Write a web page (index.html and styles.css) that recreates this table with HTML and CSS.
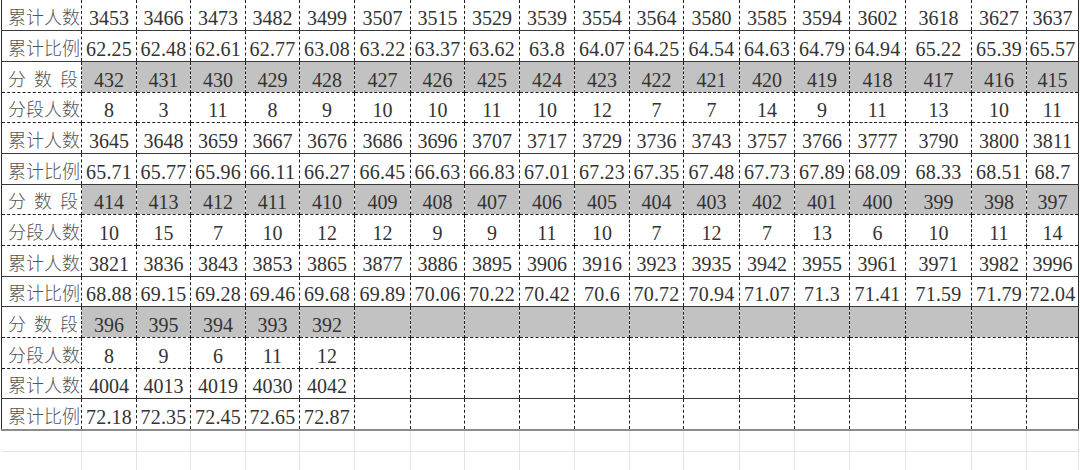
FILE: index.html
```html
<!DOCTYPE html>
<html>
<head>
<meta charset="utf-8">
<title>分数段统计</title>
<link rel="stylesheet" href="styles.css">
</head>
<body>
<table class="sheet">
<colgroup>
<col class="c-label"><col class="w55"><col class="w54"><col class="w55"><col class="w54"><col class="w55"><col class="w56"><col class="w54"><col class="w55"><col class="w55"><col class="w55"><col class="w54"><col class="w56"><col class="w55"><col class="w55"><col class="w56"><col class="w66"><col class="w55"><col class="w52">
</colgroup>
<tbody>
<tr class="solid"><th>累计人数</th><td>3453</td><td>3466</td><td>3473</td><td>3482</td><td>3499</td><td>3507</td><td>3515</td><td>3529</td><td>3539</td><td>3554</td><td>3564</td><td>3580</td><td>3585</td><td>3594</td><td>3602</td><td>3618</td><td>3627</td><td>3637</td></tr>
<tr class="solid ratio"><th>累计比例</th><td>62.25</td><td>62.48</td><td>62.61</td><td>62.77</td><td>63.08</td><td>63.22</td><td>63.37</td><td>63.62</td><td>63.8</td><td>64.07</td><td>64.25</td><td>64.54</td><td>64.63</td><td>64.79</td><td>64.94</td><td>65.22</td><td>65.39</td><td>65.57</td></tr>
<tr class="band"><th class="spread">分数段</th><td>432</td><td>431</td><td>430</td><td>429</td><td>428</td><td>427</td><td>426</td><td>425</td><td>424</td><td>423</td><td>422</td><td>421</td><td>420</td><td>419</td><td>418</td><td>417</td><td>416</td><td>415</td></tr>
<tr><th>分段人数</th><td>8</td><td>3</td><td>11</td><td>8</td><td>9</td><td>10</td><td>10</td><td>11</td><td>10</td><td>12</td><td>7</td><td>7</td><td>14</td><td>9</td><td>11</td><td>13</td><td>10</td><td>11</td></tr>
<tr class="solid"><th>累计人数</th><td>3645</td><td>3648</td><td>3659</td><td>3667</td><td>3676</td><td>3686</td><td>3696</td><td>3707</td><td>3717</td><td>3729</td><td>3736</td><td>3743</td><td>3757</td><td>3766</td><td>3777</td><td>3790</td><td>3800</td><td>3811</td></tr>
<tr class="solid ratio"><th>累计比例</th><td>65.71</td><td>65.77</td><td>65.96</td><td>66.11</td><td>66.27</td><td>66.45</td><td>66.63</td><td>66.83</td><td>67.01</td><td>67.23</td><td>67.35</td><td>67.48</td><td>67.73</td><td>67.89</td><td>68.09</td><td>68.33</td><td>68.51</td><td>68.7</td></tr>
<tr class="band"><th class="spread">分数段</th><td>414</td><td>413</td><td>412</td><td>411</td><td>410</td><td>409</td><td>408</td><td>407</td><td>406</td><td>405</td><td>404</td><td>403</td><td>402</td><td>401</td><td>400</td><td>399</td><td>398</td><td>397</td></tr>
<tr><th>分段人数</th><td>10</td><td>15</td><td>7</td><td>10</td><td>12</td><td>12</td><td>9</td><td>9</td><td>11</td><td>10</td><td>7</td><td>12</td><td>7</td><td>13</td><td>6</td><td>10</td><td>11</td><td>14</td></tr>
<tr class="solid"><th>累计人数</th><td>3821</td><td>3836</td><td>3843</td><td>3853</td><td>3865</td><td>3877</td><td>3886</td><td>3895</td><td>3906</td><td>3916</td><td>3923</td><td>3935</td><td>3942</td><td>3955</td><td>3961</td><td>3971</td><td>3982</td><td>3996</td></tr>
<tr class="solid ratio"><th>累计比例</th><td>68.88</td><td>69.15</td><td>69.28</td><td>69.46</td><td>69.68</td><td>69.89</td><td>70.06</td><td>70.22</td><td>70.42</td><td>70.6</td><td>70.72</td><td>70.94</td><td>71.07</td><td>71.3</td><td>71.41</td><td>71.59</td><td>71.79</td><td>72.04</td></tr>
<tr class="band"><th class="spread">分数段</th><td>396</td><td>395</td><td>394</td><td>393</td><td>392</td><td></td><td></td><td></td><td></td><td></td><td></td><td></td><td></td><td></td><td></td><td></td><td></td><td></td></tr>
<tr><th>分段人数</th><td>8</td><td>9</td><td>6</td><td>11</td><td>12</td><td></td><td></td><td></td><td></td><td></td><td></td><td></td><td></td><td></td><td></td><td></td><td></td><td></td></tr>
<tr class="solid"><th>累计人数</th><td>4004</td><td>4013</td><td>4019</td><td>4030</td><td>4042</td><td></td><td></td><td></td><td></td><td></td><td></td><td></td><td></td><td></td><td></td><td></td><td></td><td></td></tr>
<tr class="last ratio"><th>累计比例</th><td>72.18</td><td>72.35</td><td>72.45</td><td>72.65</td><td>72.87</td><td></td><td></td><td></td><td></td><td></td><td></td><td></td><td></td><td></td><td></td><td></td><td></td><td></td></tr>
<tr class="ghost"><th></th><td></td><td></td><td></td><td></td><td></td><td></td><td></td><td></td><td></td><td></td><td></td><td></td><td></td><td></td><td></td><td></td><td></td><td></td></tr>
<tr class="ghost"><th></th><td></td><td></td><td></td><td></td><td></td><td></td><td></td><td></td><td></td><td></td><td></td><td></td><td></td><td></td><td></td><td></td><td></td><td></td></tr>
</tbody>
</table>
</body>
</html>
```
FILE: styles.css
```css
html, body {
  margin: 0;
  padding: 0;
  background: #ffffff;
}

body {
  padding-left: 1px;
  overflow: hidden;
  font-family: "Liberation Serif", "Times New Roman", serif;
}

.sheet {
  border-collapse: collapse;
  table-layout: fixed;
  width: 1077px;
  color: #333333;
}

.c-label { width: 80px; }
.w52 { width: 52px; }
.w54 { width: 54px; }
.w55 { width: 55px; }
.w56 { width: 56px; }
.w66 { width: 66px; }

.sheet tr {
  height: 30.7px;
}

.sheet td {
  padding: 0 0 2px 0;
  border-right: 1px dashed #1e1e1e;
  border-bottom: 1px dashed #1e1e1e;
  vertical-align: bottom;
  text-align: center;
  font-family: "Liberation Serif", "Times New Roman", Times, serif;
  font-size: 20px;
  line-height: 20px;
  font-weight: normal;
  color: #333333;
  white-space: nowrap;
  overflow: hidden;
}

.sheet tr.ratio > td {
  letter-spacing: 0.2px;
}

.sheet th {
  border-left: 1px solid #2a2a2a;
  border-right: 1px dashed #1e1e1e;
  border-bottom: 1px dashed #1e1e1e;
  vertical-align: bottom;
  text-align: left;
  white-space: nowrap;
  overflow: hidden;
  padding: 0 3px 4px 6px;
  font-family: "Noto Sans CJK SC", sans-serif;
  font-size: 18px;
  line-height: 20px;
  font-weight: 300;
  letter-spacing: 0;
  color: #555555;
}

.sheet th.spread {
  text-align: justify;
  text-align-last: justify;
}

.sheet td:last-child {
  border-right: 1px solid #2a2a2a;
}

.sheet tr.solid > td,
.sheet tr.solid > th {
  border-bottom: 1px solid #3a3a3a;
}

.sheet tr.band > td {
  background: #c2c2c2;
}

.sheet tr.last > td,
.sheet tr.last > th {
  border-bottom: 2px solid #8c8c8c;
}

.sheet tr.ghost {
  height: 22px;
}

.sheet tr.ghost > td,
.sheet tr.ghost > th {
  border-left: none;
  border-right: 1px solid #e4e4e4;
  border-bottom: 1px solid #e4e4e4;
  padding: 0;
}
```
